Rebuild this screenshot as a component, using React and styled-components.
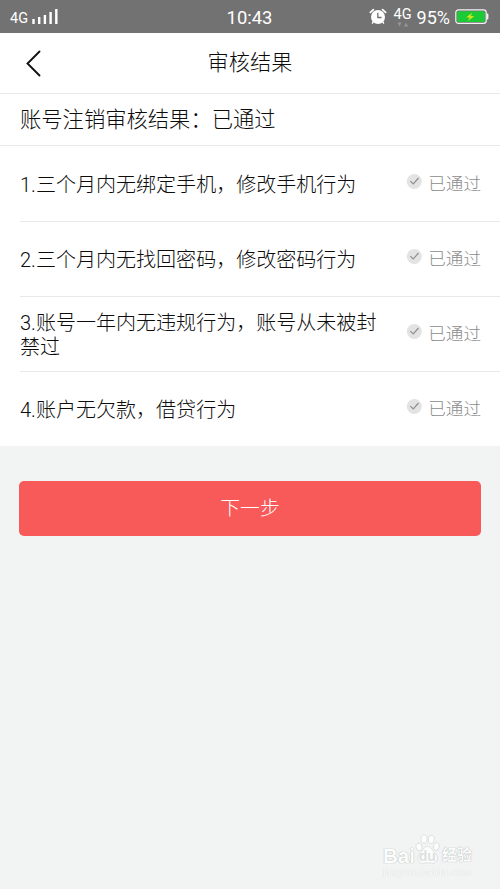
import React from "react";
import styled, { createGlobalStyle } from "styled-components";

const colors = {
  bar: "#727272",
  page: "#f2f4f4",
  text: "#0c0c0c",
  muted: "#8c8c8c",
  line: "#e9e9e9",
  primary: "#f85959",
};

const items = [
  "1.三个月内无绑定手机，修改手机行为",
  "2.三个月内无找回密码，修改密码行为",
  "3.账号一年内无违规行为，账号从未被封禁过",
  "4.账户无欠款，借贷行为",
];

const signalBars = [5, 7, 9, 12, 15];

/* StatusBar
 *
 * Signal, clock, network and battery.
 */
const StatusBar = () => (
  <StyledStatusBar>
    <StyledStatusSide>
      <StyledCarrier>4G</StyledCarrier>
      <svg width="27" height="16" fill="#fff">
        {signalBars.map((h, i) => (
          <rect key={h} x={i * 5.7 + 0.3} y={15 - h} width="2.4" height={h} />
        ))}
      </svg>
    </StyledStatusSide>
    <StyledClock>10:43</StyledClock>
    <StyledStatusSide isRight>
      <AlarmIcon />
      <StyledNetwork>
        4G
        <svg width="12" height="5" fill="#969696">
          <path d="M0.5 0.5h4L2.5 4.5zM7 4.5h4L9 0.5z" />
        </svg>
      </StyledNetwork>
      <StyledPercent>95%</StyledPercent>
      <BatteryIcon />
    </StyledStatusSide>
  </StyledStatusBar>
);

const AlarmIcon = () => (
  <svg width="18" height="17" viewBox="0 0 18 17" fill="none">
    <path d="M1.4 4.4 4.4 1.6M13.6 1.6l3 2.8" stroke="#fff" strokeWidth="1.8" strokeLinecap="round" />
    <circle cx="9" cy="9" r="7" fill="#fff" />
    <path d="M4.5 13.5 3.4 15.2M13.5 13.5l1.1 1.7" stroke="#fff" strokeWidth="1.4" strokeLinecap="round" />
    <path d="M8.8 4.8v4.7h3.8" stroke={colors.bar} strokeWidth="1.3" />
  </svg>
);

const BatteryIcon = () => (
  <svg width="34" height="16" viewBox="0 0 34 16">
    <rect x="0.8" y="0.8" width="30.4" height="13.6" rx="2.6" fill="none" stroke="#f2f2f2" strokeWidth="1.2" />
    <rect x="2.2" y="2.2" width="27.6" height="10.8" rx="1" fill="#1bcb35" />
    <path d="M31.6 4.6h0.8q1 0 1 1v4q0 1-1 1H31.6z" fill="#f2f2f2" />
    <path d="M17.5 3.4 11.3 8.3l3.5 0.4-2.2 3.5 6.6-4.9-3.6-0.4z" fill="#d5e516" />
  </svg>
);

const CheckIcon = () => (
  <svg width="16" height="16" viewBox="0 0 16 16" fill="none">
    <circle cx="8.3" cy="7.5" r="7.5" fill="#e3e3e3" />
    <path d="M4.3 7.1 7.3 10l5.2-6" stroke="#909090" strokeWidth="1.2" />
  </svg>
);

/* Watermark
 *
 * Faint site mark in the lower corner.
 */
const Watermark = () => (
  <StyledWatermark>
    <StyledMarkRow>
      <StyledMarkText>Bai</StyledMarkText>
      <svg width="25" height="31" viewBox="0 0 25 31" fill="#fcfdfd" stroke="#d8dbdb" strokeWidth="0.8">
        <ellipse cx="4" cy="13" rx="3" ry="4" transform="rotate(-15 4 13)" />
        <ellipse cx="9" cy="5" rx="3" ry="4.2" />
        <ellipse cx="16.3" cy="5.4" rx="3" ry="4.2" transform="rotate(12 16.3 5.4)" />
        <ellipse cx="21.4" cy="12.5" rx="2.9" ry="3.9" transform="rotate(15 21.4 12.5)" />
        <path d="M12.5 12.5c-3.6 0-4.5 4-7 6.2-5 4.3-2.5 10.6 2 10.6 2 0 3-.6 5-.6s3 .6 5 .6c5 0 7-6.3 2.3-10.5-2.8-2.3-3.6-6.3-7.3-6.3z" />
        <StyledMarkInner x="12.3" y="27" textAnchor="middle">du</StyledMarkInner>
      </svg>
      <StyledMarkText isSmall>经验</StyledMarkText>
    </StyledMarkRow>
    <StyledMarkUrl>jingyan.baidu.com</StyledMarkUrl>
  </StyledWatermark>
);

const App = () => (
  <StyledPage>
    <GlobalStyle />
    <StatusBar />
    <StyledHeader>
      <StyledBack aria-label="返回">
        <svg width="15" height="27" viewBox="0 0 15 27" fill="none">
          <path d="M13.5 1.5 1.5 13.5l12 12" stroke="#111" strokeWidth="1.9" strokeLinecap="round" />
        </svg>
      </StyledBack>
      <StyledTitle>审核结果</StyledTitle>
    </StyledHeader>
    <StyledSummary>账号注销审核结果：已通过</StyledSummary>
    <StyledList>
      {items.map((item) => (
        <StyledItem key={item}>
          <StyledItemText>{item}</StyledItemText>
          <StyledResult>
            <CheckIcon />
            <StyledResultText>已通过</StyledResultText>
          </StyledResult>
        </StyledItem>
      ))}
    </StyledList>
    <StyledFooter>
      <StyledButton>下一步</StyledButton>
    </StyledFooter>
    <Watermark />
  </StyledPage>
);

const GlobalStyle = createGlobalStyle`
  * {
    box-sizing: border-box;
  }
  body {
    margin: 0;
    background: ${colors.page};
  }
  svg {
    display: block;
    flex: none;
  }
`;
const StyledPage = styled.div`
  display: flex;
  flex-direction: column;
  height: 889px;
  overflow: hidden;
  background: ${colors.page};
  color: ${colors.text};
  font-family: Roboto, "Noto Sans CJK SC", sans-serif;
  font-weight: 300;
`;
const StyledStatusBar = styled.div`
  display: grid;
  grid-template-columns: 1fr auto 1fr;
  align-items: center;
  height: 33px;
  padding: 0 11px 0 10px;
  background: ${colors.bar};
  color: #fff;
  font-family: Roboto, sans-serif;
  font-weight: 400;
`;
const StyledStatusSide = styled.div`
  display: flex;
  align-items: center;
  justify-content: ${(p) => (p.isRight ? "flex-end" : "flex-start")};
`;
const StyledCarrier = styled.span`
  margin: 4px 4px 0 0;
  font-size: 14.5px;
  line-height: 16px;
`;
const StyledClock = styled.span`
  padding-top: 2px;
  font-size: 18.4px;
  line-height: 20px;
`;
const StyledNetwork = styled.div`
  display: flex;
  flex-direction: column;
  align-items: center;
  margin: 0 5px 0 7px;
  font-size: 14.5px;
  line-height: 15px;
`;
const StyledPercent = styled.span`
  margin-right: 5px;
  padding-top: 2px;
  font-size: 18px;
  line-height: 20px;
`;
const StyledHeader = styled.header`
  display: grid;
  grid-template-columns: 60px 1fr 60px;
  align-items: center;
  height: 61px;
  border-bottom: 1px solid ${colors.line};
  background: #fff;
`;
const StyledBack = styled.button`
  padding: 0 0 0 26px;
  border: 0;
  background: none;
`;
const StyledTitle = styled.h1`
  margin: 0;
  padding-bottom: 1px;
  font-size: 21.2px;
  font-weight: 300;
  line-height: 30px;
  text-align: center;
`;
const StyledSummary = styled.div`
  height: 52px;
  padding: 1px 20px 0;
  border-bottom: 1px solid ${colors.line};
  background: #fff;
  font-size: 21.3px;
  line-height: 49px;
`;
const StyledList = styled.ul`
  margin: 0;
  padding: 1px 0 0 20px;
  background: #fff;
  list-style: none;
`;
const StyledItem = styled.li`
  display: flex;
  align-items: center;
  justify-content: space-between;
  height: 75px;
  padding-right: 19px;
  border-bottom: 1px solid ${colors.line};

  &:last-child {
    height: 74px;
    border-bottom: 0;
  }
`;
const StyledItemText = styled.span`
  width: 364px;
  padding-top: 1px;
  font-size: 20.05px;
  line-height: 24px;
`;
const StyledResult = styled.div`
  display: flex;
  align-items: flex-start;
  gap: 6px;
  margin-left: -10px;
  color: ${colors.muted};

  svg {
    margin-top: 2px;
  }
`;
const StyledResultText = styled.span`
  font-size: 17.6px;
  line-height: 24px;
`;
const StyledFooter = styled.div`
  padding: 35px 19px 0;
`;
const StyledButton = styled.button`
  display: block;
  width: 100%;
  height: 55px;
  padding: 0 0 4px;
  border: 0;
  border-radius: 5px;
  background: ${colors.primary};
  color: #fff;
  font: inherit;
  font-size: 19.8px;
`;
const StyledWatermark = styled.div`
  width: 91px;
  margin: auto 26px 9px auto;
  color: #fcfdfd;
  font-family: "Liberation Sans", "Noto Sans CJK SC", sans-serif;
`;
const StyledMarkRow = styled.div`
  display: flex;
  align-items: flex-end;
`;
const StyledMarkText = styled.span`
  font-size: ${(p) => (p.isSmall ? "15px" : "20.5px")};
  font-weight: 700;
  line-height: ${(p) => (p.isSmall ? "20px" : "18px")};
  padding-left: ${(p) => (p.isSmall ? "2px" : "0")};
  white-space: nowrap;
  text-shadow: 0 0 1px #b4b8b8, 0 0 1px #b4b8b8;
`;
const StyledMarkInner = styled.text`
  fill: #dde0e0;
  stroke: none;
  font-size: 14px;
  font-weight: 700;
`;
const StyledMarkUrl = styled.div`
  font-size: 11px;
  font-weight: 400;
  line-height: 15px;
  text-shadow: 0 0 1px #c4c9c9;
`;

export default App;
